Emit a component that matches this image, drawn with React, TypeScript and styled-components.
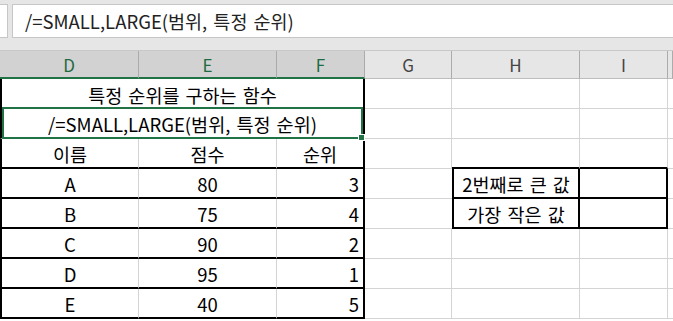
import React from 'react';
import styled, { createGlobalStyle, css } from 'styled-components';

type Edge = 'thin' | 'thick' | 'none';

const COLS = [139, 138, 88, 87, 128, 88];
const TRACKS = `${COLS.map((w) => `${w}px`).join(' ')} 1fr`;
const GRID_LINE = '#d4d4d4';
const EXCEL_GREEN = '#217346';

const edge = (kind: Edge) => {
  if (kind === 'thick') return '2px solid #000';
  if (kind === 'none') return 'none';
  return `1px solid ${GRID_LINE}`;
};

const GlobalStyle = createGlobalStyle`
  html, body {
    margin: 0;
    padding: 0;
    background: #fff;
    overflow: hidden;
  }
  body {
    font-family: "Noto Sans CJK KR", "Noto Sans", sans-serif;
  }
`;

const Sheet = styled.div`
  width: 673px;
  height: 321px;
  overflow: hidden;
  background: #fff;
`;

const FormulaArea = styled.div`
  display: flex;
  align-items: flex-start;
  gap: 4px;
  height: 50px;
  padding-top: 4px;
  box-sizing: border-box;
  background: #e6e6e6;
`;

const NameBox = styled.div`
  width: 8px;
  height: 34px;
  box-sizing: border-box;
  background: #fff;
  border: 1px solid #c6c6c6;
  border-left: none;
`;

const FormulaBar = styled.div`
  flex: 1;
  display: flex;
  align-items: center;
  height: 34px;
  padding-left: 12px;
  box-sizing: border-box;
  background: #fff;
  border: 1px solid #c6c6c6;
  border-right: none;
  font-size: 18.5px;
  word-spacing: 2px;
  color: #222;
  white-space: nowrap;
`;

const HeaderRow = styled.div`
  display: grid;
  grid-template-columns: ${TRACKS};
  height: 29px;
  box-sizing: border-box;
  border-top: 1px solid #c8c8c8;
  background: #e6e6e6;
`;

const ColHead = styled.div<{ $active?: boolean }>`
  display: flex;
  align-items: center;
  justify-content: center;
  box-sizing: border-box;
  border-right: 1px solid #ababab;
  font-size: 17px;
  ${(p) => (p.$active
    ? css`
      background: #d2d2d2;
      color: #1d6b40;
      border-bottom: 2px solid ${EXCEL_GREEN};
    `
    : css`
      color: #444;
      border-bottom: 1px solid #bdbdbd;
    `)}
`;

const Body = styled.div`
  display: grid;
  grid-template-columns: ${TRACKS};
  grid-auto-rows: 30px;
`;

const Cell = styled.div<{
  $r?: Edge;
  $b?: Edge;
  $l?: Edge;
  $align?: 'center' | 'right';
  $span?: number;
  $front?: boolean;
}>`
  position: relative;
  z-index: ${(p) => (p.$front ? 2 : 1)};
  display: flex;
  align-items: center;
  justify-content: ${(p) => (p.$align === 'right' ? 'flex-end' : 'center')};
  grid-column: span ${(p) => p.$span ?? 1};
  box-sizing: border-box;
  padding: 1px 4px 0;
  font-size: 18.5px;
  word-spacing: 2px;
  color: #000;
  white-space: nowrap;
  border-right: ${(p) => edge(p.$r ?? 'thin')};
  border-bottom: ${(p) => edge(p.$b ?? 'thin')};
  border-left: ${(p) => (p.$l ? edge(p.$l) : 'none')};
`;

// active cell outline with the fill handle on its corner
const Selection = styled.div`
  position: absolute;
  left: 0;
  right: 0;
  top: -2px;
  bottom: -1px;
  border: 2px solid ${EXCEL_GREEN};
  pointer-events: none;
`;

const FillHandle = styled.div`
  position: absolute;
  right: -4px;
  bottom: -4px;
  width: 5px;
  height: 5px;
  background: ${EXCEL_GREEN};
  border: 1px solid #fff;
`;

const scores = [
  { name: 'A', score: 80, rank: 3 },
  { name: 'B', score: 75, rank: 4 },
  { name: 'C', score: 90, rank: 2 },
  { name: 'D', score: 95, rank: 1 },
  { name: 'E', score: 40, rank: 5 },
];

const lookups = ['2번째로 큰 값', '가장 작은 값'];

const FORMULA = '/=SMALL,LARGE(범위, 특정 순위)';

export default function App() {
  return (
    <Sheet>
      <GlobalStyle />
      <FormulaArea>
        <NameBox />
        <FormulaBar>{FORMULA}</FormulaBar>
      </FormulaArea>

      <HeaderRow>
        {['D', 'E', 'F', 'G', 'H', 'I', ''].map((c, i) => (
          <ColHead key={c || 'J'} $active={i < 3}>{c}</ColHead>
        ))}
      </HeaderRow>

      <Body>
        {/* title */}
        <Cell $span={3} $l="thick" $r="thick" $b="none">특정 순위를 구하는 함수</Cell>
        <Cell />
        <Cell />
        <Cell />
        <Cell />

        {/* formula, selected */}
        <Cell $span={3} $l="thick" $r="thick" $front>
          {FORMULA}
          <Selection>
            <FillHandle />
          </Selection>
        </Cell>
        <Cell />
        <Cell />
        <Cell />
        <Cell />

        {/* column titles */}
        <Cell $l="thick" $b="thick">이름</Cell>
        <Cell $b="thick">점수</Cell>
        <Cell $r="thick" $b="thick">순위</Cell>
        <Cell />
        <Cell $b="thick" />
        <Cell $b="thick" />
        <Cell />

        {scores.map((s, i) => (
          <React.Fragment key={s.name}>
            <Cell $l="thick" $b="thick">{s.name}</Cell>
            <Cell $b="thick">{s.score}</Cell>
            <Cell $r="thick" $b="thick" $align="right">{s.rank}</Cell>
            <Cell $r={i < lookups.length ? 'none' : 'thin'} />
            {i < lookups.length ? (
              <>
                <Cell $l="thick" $r="thick" $b="thick">{lookups[i]}</Cell>
                <Cell $r="thick" $b="thick" />
              </>
            ) : (
              <>
                <Cell />
                <Cell />
              </>
            )}
            <Cell />
          </React.Fragment>
        ))}
      </Body>
    </Sheet>
  );
}
